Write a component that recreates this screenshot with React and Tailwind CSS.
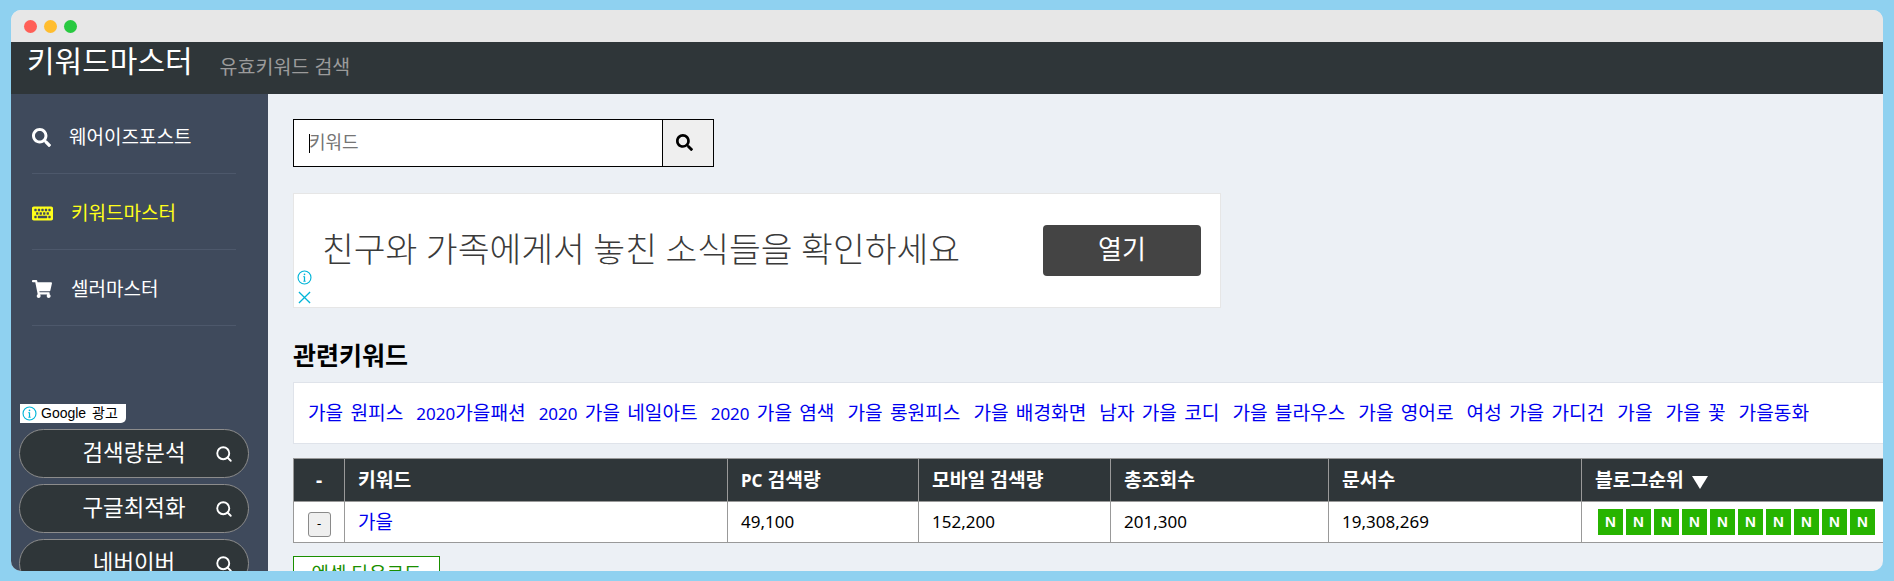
import React from 'react';
import { FaSearch, FaKeyboard, FaShoppingCart } from 'react-icons/fa';
import { Search } from 'lucide-react';

const related = ['가을 원피스','2020가을패션','2020 가을 네일아트','2020 가을 염색','가을 롱원피스','가을 배경화면','남자 가을 코디','가을 블라우스','가을 영어로','여성 가을 가디건','가을','가을 꽃','가을동화'];
const cols = [
  { w: 'w-[51px]', label: '-', center: true },
  { w: 'w-[383px]', label: '키워드' },
  { w: 'w-[191px]', label: 'PC 검색량' },
  { w: 'w-[192px]', label: '모바일 검색량' },
  { w: 'w-[218px]', label: '총조회수' },
  { w: 'w-[253px]', label: '문서수' },
  { w: 'w-[302px]', label: '블로그순위' },
];

function Mixed({ text }) {
  return text.split(/([0-9A-Za-z,]+)/).map((part, i) =>
    /^[0-9A-Za-z,]+$/.test(part) ? <span key={i} className="text-[17px]">{part}</span> : <span key={i}>{part}</span>
  );
}

function InfoIcon({ className }) {
  return (
    <svg viewBox="0 0 16 16" className={className} fill="none" stroke="#00b5d8" strokeWidth="1.2">
      <circle cx="8" cy="8" r="6.9" />
      <path d="M8 7v5M6.8 12h2.4M6.8 7H8" strokeWidth="1.3" />
      <circle cx="8" cy="4.6" r="0.9" fill="#00b5d8" stroke="none" />
    </svg>
  );
}

function MenuItem({ icon, label, active, w }) {
  return (
    <div className={`flex h-[76px] items-center border-b border-[#4d586b] pt-[3px] ${active ? 'text-[#ffff1a]' : 'text-white'}`}>
      <span className={`flex ${w}`}>{icon}</span>
      <span className="text-[19px] leading-none">{label}</span>
    </div>
  );
}

function Pill({ label }) {
  return (
    <div className="relative flex h-[49px] w-[230px] shrink-0 items-center justify-center rounded-full border border-[#8c8c8c] bg-[#2f3639] pb-[1px] text-[22.4px] leading-none text-white">
      <span>{label}</span>
      <Search size={18} strokeWidth={2.5} className="absolute right-[15px] top-[15px] text-white" />
    </div>
  );
}

export default function App() {
  return (
    <div className="h-[581px] w-[1894px] overflow-hidden bg-[#8fd1f0] pl-[11px] pt-[10px] font-['Noto_Sans','Noto_Sans_CJK_KR',sans-serif]">
      <div className="flex h-[561px] w-[1872px] flex-col overflow-hidden rounded-[10px] bg-[#ecf0f5]">
        <div className="flex h-[32px] shrink-0 items-center gap-[7px] bg-[#e7e7e7] pl-[13px]">
          <span className="h-[13px] w-[13px] rounded-full bg-[#ff5f57]" />
          <span className="h-[13px] w-[13px] rounded-full bg-[#ffbd2e]" />
          <span className="h-[13px] w-[13px] rounded-full bg-[#28c940]" />
        </div>
        <div className="flex h-[52px] shrink-0 items-start bg-[#2f3639] pl-[16px]">
          <span className="mt-[1px] text-[30px] leading-[36px] text-white">키워드마스터</span>
          <span className="ml-[27px] mt-[11px] text-[19.5px] leading-[28px] text-[#9b9b9b]">유효키워드 검색</span>
        </div>
        <div className="flex min-h-0 flex-1">
          <aside className="flex w-[257px] shrink-0 flex-col overflow-hidden bg-[#3f4a5c]">
            <nav className="ml-[21px] mt-[4px] w-[204px]">
              <MenuItem icon={<FaSearch size={19} />} label="웨어이즈포스트" w="w-[37px]" />
              <MenuItem icon={<FaKeyboard size={21} />} label="키워드마스터" active w="w-[39px]" />
              <MenuItem icon={<FaShoppingCart size={20} />} label="셀러마스터" w="w-[39px]" />
            </nav>
            <div className="ml-[9px] mt-[78px] flex h-[19px] w-[106px] items-center gap-[4px] rounded-br-[5px] bg-white pl-[2px] font-['Liberation_Sans','Noto_Sans_CJK_KR',sans-serif] text-[14px] text-black">
              <InfoIcon className="h-[15px] w-[15px]" />
              <span>Google <span className="ml-[2px] text-[14px]">광고</span></span>
            </div>
            <div className="ml-[8px] mt-[6px] flex flex-col gap-[6px]">
              <Pill label="검색량분석" />
              <Pill label="구글최적화" />
              <Pill label="네버이버" />
            </div>
          </aside>
          <main className="min-w-0 flex-1 overflow-hidden pl-[25px] pt-[25px]">
            <div className="relative flex h-[48px] w-[421px] border border-black">
              <input readOnly placeholder="키워드" className="h-full w-[368px] bg-white pb-[3px] pl-[15px] text-[18px] text-black outline-none placeholder:text-[#757575]" />
              <span className="absolute left-[15px] top-[14px] h-[19px] w-px bg-black" />
              <div className="flex h-full flex-1 items-center border-l border-black bg-[#efefef] pb-[2px] pl-[13px] text-black">
                <FaSearch size={17} />
              </div>
            </div>

            <div className="relative mt-[26px] flex h-[115px] w-[928px] items-center border border-[#e6e6e6] bg-white pl-[28px] pb-[1px] font-['Roboto','Noto_Sans_CJK_KR',sans-serif]">
              <span className="text-[34.6px] font-light leading-none text-[#3a3a3a]">친구와 가족에게서 놓친 소식들을 확인하세요</span>
              <div className="absolute left-[749px] top-[31px] flex h-[51px] w-[158px] items-center justify-center rounded-[4px] bg-[#444444] text-[26px] text-white">열기</div>
              <InfoIcon className="absolute bottom-[22px] left-[3px] h-[15px] w-[15px]" />
              <svg viewBox="0 0 14 14" className="absolute bottom-[3px] left-[4px] h-[13px] w-[13px]" fill="none" stroke="#00b5d8" strokeWidth="1.4">
                <path d="M1 1l12 12M13 1L1 13" />
              </svg>
            </div>

            <h2 className="mt-[31px] text-[25px] font-bold leading-[32px] text-black">관련키워드</h2>

            <div className="mt-[11px] flex h-[62px] items-center gap-[13px] border-y border-l border-[#dfe3ea] bg-white pl-[14px]">
              {related.map((t) => (
                <a key={t} href="#" className="whitespace-nowrap text-[19.15px] text-[#0000ee] [word-spacing:2.25px]"><Mixed text={t} /></a>
              ))}
            </div>

            <table className="mt-[14px] w-[1590px] table-fixed border-collapse">
              <thead>
                <tr className="h-[43px] bg-[#2f3639] text-white">
                  {cols.map((c) => (
                    <th key={c.label} className={`${c.w} border border-[#999999] text-[19.3px] font-bold ${c.center ? 'text-center' : 'pl-[13px] text-left'}`}>
                      <Mixed text={c.label} />
                      {c.label === '블로그순위' && <span className="ml-[8px] inline-block h-0 w-0 translate-y-[2px] border-x-[8px] border-t-[13px] border-x-transparent border-t-white" />}
                    </th>
                  ))}
                </tr>
              </thead>
              <tbody>
                <tr className="h-[41px] bg-white text-[19px] text-black">
                  <td className="border border-[#999999] text-center">
                    <span className="inline-flex h-[25px] w-[23px] items-center justify-center rounded-[3px] border border-[#8a8a8a] bg-[#efefef] text-[13px]">-</span>
                  </td>
                  <td className="border border-[#999999] pl-[13px]"><a href="#" className="text-[#0000ee]">가을</a></td>
                  <td className="border border-[#999999] pl-[13px] text-[17px]">49,100</td>
                  <td className="border border-[#999999] pl-[13px] text-[17px]">152,200</td>
                  <td className="border border-[#999999] pl-[13px] text-[17px]">201,300</td>
                  <td className="border border-[#999999] pl-[13px] text-[17px]">19,308,269</td>
                  <td className="border border-[#999999] pl-[16px]">
                    <div className="flex gap-[3px]">
                      {Array.from({ length: 10 }).map((_, i) => (
                        <span key={i} className="flex h-[26px] w-[25px] items-center justify-center bg-[#27b400] font-['Liberation_Sans',sans-serif] text-[15px] font-bold text-white">N</span>
                      ))}
                    </div>
                  </td>
                </tr>
              </tbody>
            </table>

            <div className="mt-[13px] flex h-[40px] w-[147px] items-start justify-center border border-[#1a8f00] bg-white pt-[3px] text-[19px] text-[#1a8f00]">엑셀 다운로드</div>
          </main>
        </div>
      </div>
    </div>
  );
}
